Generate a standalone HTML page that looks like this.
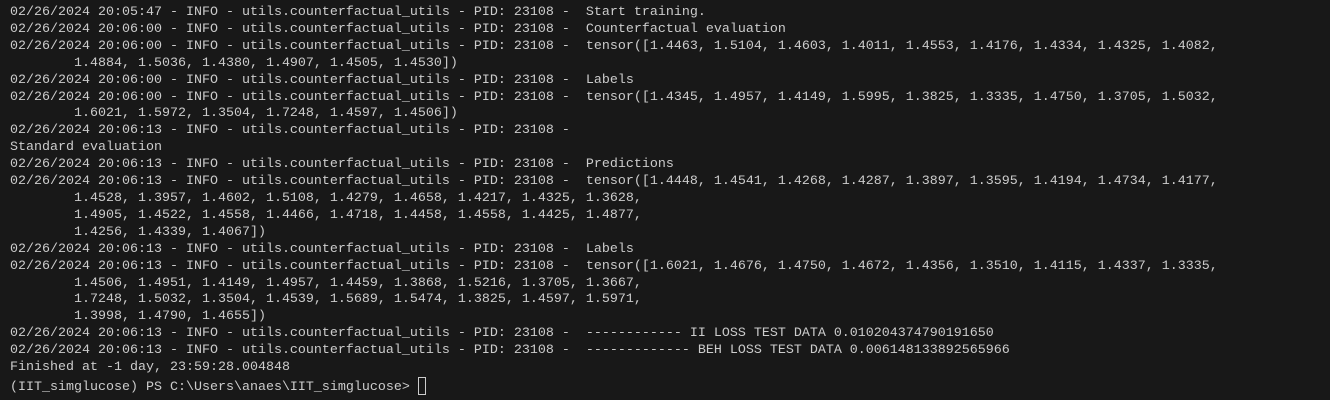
<!DOCTYPE html>
<html><head><style>
html,body{margin:0;padding:0;background:#181818;width:1330px;height:400px;overflow:hidden}
pre{margin:0;position:absolute;left:10px;top:5px;font-family:"Liberation Mono",monospace;font-size:13.33px;line-height:16.9px;color:#cccccc;white-space:pre}
.cur{display:inline-block;width:8px;height:18px;border:1px solid #cccccc;vertical-align:-5px;box-sizing:border-box}
</style></head><body>
<pre>02/26/2024 20:05:47 - INFO - utils.counterfactual_utils - PID: 23108 -  Start training.
02/26/2024 20:06:00 - INFO - utils.counterfactual_utils - PID: 23108 -  Counterfactual evaluation
02/26/2024 20:06:00 - INFO - utils.counterfactual_utils - PID: 23108 -  tensor([1.4463, 1.5104, 1.4603, 1.4011, 1.4553, 1.4176, 1.4334, 1.4325, 1.4082,
        1.4884, 1.5036, 1.4380, 1.4907, 1.4505, 1.4530])
02/26/2024 20:06:00 - INFO - utils.counterfactual_utils - PID: 23108 -  Labels
02/26/2024 20:06:00 - INFO - utils.counterfactual_utils - PID: 23108 -  tensor([1.4345, 1.4957, 1.4149, 1.5995, 1.3825, 1.3335, 1.4750, 1.3705, 1.5032,
        1.6021, 1.5972, 1.3504, 1.7248, 1.4597, 1.4506])
02/26/2024 20:06:13 - INFO - utils.counterfactual_utils - PID: 23108 -
Standard evaluation
02/26/2024 20:06:13 - INFO - utils.counterfactual_utils - PID: 23108 -  Predictions
02/26/2024 20:06:13 - INFO - utils.counterfactual_utils - PID: 23108 -  tensor([1.4448, 1.4541, 1.4268, 1.4287, 1.3897, 1.3595, 1.4194, 1.4734, 1.4177,
        1.4528, 1.3957, 1.4602, 1.5108, 1.4279, 1.4658, 1.4217, 1.4325, 1.3628,
        1.4905, 1.4522, 1.4558, 1.4466, 1.4718, 1.4458, 1.4558, 1.4425, 1.4877,
        1.4256, 1.4339, 1.4067])
02/26/2024 20:06:13 - INFO - utils.counterfactual_utils - PID: 23108 -  Labels
02/26/2024 20:06:13 - INFO - utils.counterfactual_utils - PID: 23108 -  tensor([1.6021, 1.4676, 1.4750, 1.4672, 1.4356, 1.3510, 1.4115, 1.4337, 1.3335,
        1.4506, 1.4951, 1.4149, 1.4957, 1.4459, 1.3868, 1.5216, 1.3705, 1.3667,
        1.7248, 1.5032, 1.3504, 1.4539, 1.5689, 1.5474, 1.3825, 1.4597, 1.5971,
        1.3998, 1.4790, 1.4655])
02/26/2024 20:06:13 - INFO - utils.counterfactual_utils - PID: 23108 -  ------------ II LOSS TEST DATA 0.010204374790191650
02/26/2024 20:06:13 - INFO - utils.counterfactual_utils - PID: 23108 -  ------------- BEH LOSS TEST DATA 0.006148133892565966
Finished at -1 day, 23:59:28.004848
(IIT_simglucose) PS C:\Users\anaes\IIT_simglucose&gt; <span class="cur"></span></pre>
</body></html>
